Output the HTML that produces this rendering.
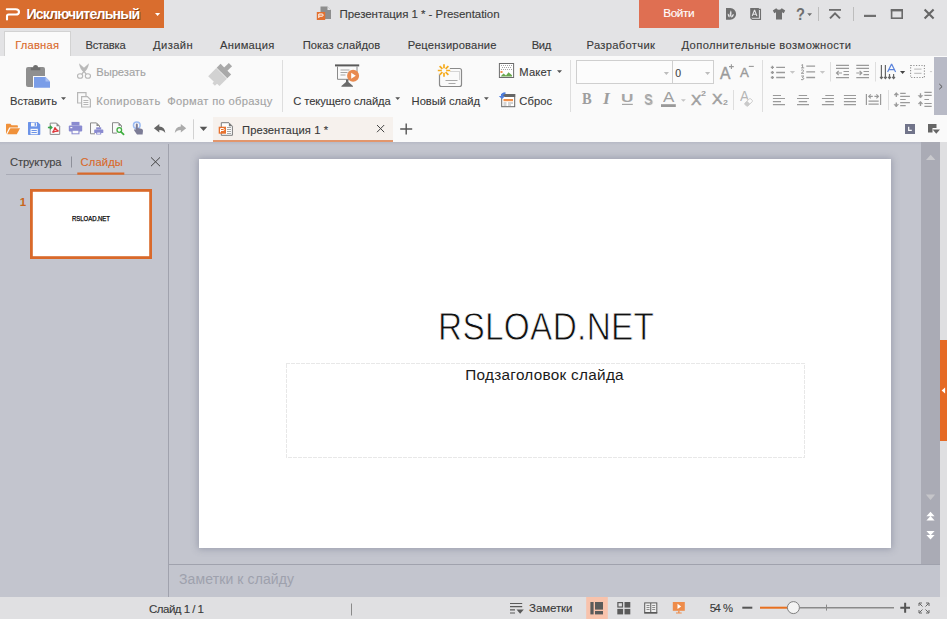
<!DOCTYPE html>
<html lang="ru">
<head>
<meta charset="utf-8">
<title>Презентация 1 * - Presentation</title>
<style>
*{box-sizing:border-box;margin:0;padding:0}
html,body{width:947px;height:619px;overflow:hidden;background:#c3c5ce}
body{font-family:"Liberation Sans",sans-serif;font-size:12px;color:#333;position:relative}
.abs{position:absolute}
.t{position:absolute;white-space:nowrap;line-height:1}
.u{-webkit-text-stroke:0.12px}
#titlebar{left:0;top:0;width:947px;height:28px;background:#e3e3e5}
#appbtn{left:0;top:0;width:164px;height:28px;background:#d96d2e}
#login{left:639px;top:0;width:80px;height:28px;background:#df6f52}
#tabrow{left:0;top:28px;width:947px;height:28px;background:#e3e3e5}
#tabactive{left:4px;top:31px;width:67px;height:25px;background:#fafafa;border:1px solid #d2d2d2;border-bottom:none}
#ribbon{left:0;top:56px;width:947px;height:86px;background:#fafafa}
#ribscroll{left:934px;top:57px;width:13px;height:58px;background:#b8bac6}
#doctab{left:213px;top:117px;width:180px;height:25px;background:#f6f1ed;border-bottom:2px solid #e2966c}
#strip{left:0;top:142px;width:947px;height:3px;background:linear-gradient(#b6b9c5,#c3c5ce)}
#leftpanel{left:0;top:146px;width:168px;height:451px;background:#c3c5ce}
#vdiv{left:168px;top:144px;width:1px;height:453px;background:#a0a2ad}
#slide{left:199px;top:159px;width:692px;height:389px;background:#fff;box-shadow:0 0 7px 1px rgba(95,100,125,.42)}
#notesline{left:169px;top:564px;width:771px;height:1px;background:#a0a2ad}
#vscroll{left:921px;top:142px;width:19px;height:422px;background:#aaabb5}
#rightstrip{left:940px;top:142px;width:7px;height:455px;background:#dfdfe1}
#orangeside{left:940px;top:340px;width:7px;height:101px;background:#e56a25}
#status{left:0;top:597px;width:947px;height:22px;background:#e0e0e2}
#thumb{left:30px;top:189px;width:122px;height:70px;background:#fff}
.sep{position:absolute;width:1px;background:#d4d4d4}
</style>
</head>
<body>
<div id="titlebar" class="abs"></div>
<div id="appbtn" class="abs"></div>
<div id="login" class="abs"></div>
<div id="tabrow" class="abs"></div>
<div id="ribbon" class="abs"></div>
<div id="tabactive" class="abs"></div>
<div id="ribscroll" class="abs"></div>
<div id="doctab" class="abs"></div>
<div id="strip" class="abs"></div>
<div id="leftpanel" class="abs"></div>
<div id="vdiv" class="abs"></div>
<div id="slide" class="abs"></div>
<div id="notesline" class="abs"></div>
<div id="vscroll" class="abs"></div>
<div id="rightstrip" class="abs"></div>
<div id="orangeside" class="abs"></div>
<div id="status" class="abs"></div>
<div id="thumb" class="abs"></div>
<svg class="abs" style="left:0;top:0" width="947" height="619" viewBox="0 0 947 619">
<!-- app logo -->
<path d="M6.8 9.3H15.6Q19 9.3 19 11.9Q19 14.5 15.6 14.5H8.6Q7 14.5 7 16V19.4" fill="none" stroke="#fff" stroke-width="2.1" stroke-linecap="round"/>
<path d="M155 13h5.2l-2.6 3z" fill="#fff"/>
<!-- title doc icon -->
<path d="M320.5 6.5h7l3.5 3.5v9h-10.5z" fill="#8e8e8e"/><path d="M327.5 6.5v3.5h3.5z" fill="#e3e3e5"/>
<rect x="316.8" y="12" width="8.4" height="8" fill="#e2702f"/>
<path d="M318.8 18v-4h3.2q1.2 0 1.200 1.100q0 1.100 -1.200 1.100h-3.200" fill="none" stroke="#fff" stroke-width="1"/>
<!-- title bar right icons -->
<g fill="#6f6f6f">
<path d="M726 8h4.200a5.900 5.900 0 0 1 0 11.800H726z"/>
<path d="M750.200 8h8.700v9.800h-8.700z"/>
<path d="M776.200 8.300l-3.400 2.200 1.500 2.700 1.700-.9v7.300h6v-7.300l1.700.9 1.500-2.700-3.400-2.200q-1.400 1.500-2.800 1.500t-2.800-1.500z"/>
<path d="M807.200 13.200h4.800l-2.400 2.700z"/>
<rect x="829" y="9" width="12" height="1.800"/>
<rect x="864" y="14.800" width="12" height="2.200"/>
</g>
<path d="M730.300 17.200C729.300 14.800 729.700 12.300 730.900 10.200C731.900 12.500 731.800 15 730.300 17.200zM729.600 17.400C728.100 16.900 727.500 15.200 727.800 13.400C729.300 14.200 729.900 15.700 729.600 17.400zM731 17.600C731 15.700 732 14.400 733.900 13.900C733.800 15.900 732.800 17.100 731 17.600z" fill="#e3e3e5"/>
<path d="M752.200 16l2.200-5.600h.3l2.200 5.600M753 14.300h3.100" fill="none" stroke="#e3e3e5" stroke-width="1.100"/>
<path d="M758.800 9.400h1.700v10h-8.200l-1.900-1.800" fill="none" stroke="#6f6f6f" stroke-width="1.100"/>
<path d="M830 18.400l5-5 5 5" fill="none" stroke="#6a6a6a" stroke-width="2"/>
<rect x="891.600" y="10.200" width="10.600" height="8" fill="none" stroke="#6a6a6a" stroke-width="1.600"/><rect x="890.800" y="9" width="12.200" height="2.400" fill="#6a6a6a"/>
<path d="M924.600 9.500l9 9M933.600 9.500l-9 9" stroke="#666" stroke-width="2.100"/>
<rect x="818" y="7" width="1" height="14" fill="#bdbdbd"/><rect x="853" y="7" width="1" height="14" fill="#bdbdbd"/>
<!-- ribbon: paste -->
<rect x="26" y="67" width="19" height="20" rx="2" fill="#8f8f8f"/>
<path d="M30.800 70.200v-2.400h2.400v-1.300q0-1.500 2.350-1.500t2.350 1.500v1.300h2.400v2.400z" fill="#6e6e6e"/>
<path d="M33 76h13l5 5v7.700h-18z" fill="#fafafa"/><path d="M34 77h11.500l4.500 4.500v6.200h-16z" fill="#7a9de8"/><path d="M45.500 77v4.500h4.500z" fill="#a9c0f2"/>
<path d="M61 97.300h5l-2.500 2.700z" fill="#555"/>
<!-- scissors -->
<g fill="none" stroke="#b7b7b7" stroke-width="1.1">
<ellipse cx="80.1" cy="76" rx="2.6" ry="2.3"/><ellipse cx="87.9" cy="76" rx="2.6" ry="2.3"/>
<path d="M84.8 70.400l-3 3.700M83.200 70.400l3 3.700" stroke-width="1.300"/>
</g>
<path d="M79 63.200L86 69.400L84.200 72.400Q79.800 69.400 79 63.200z" fill="#b9b9b9"/><path d="M89 63.200L82 69.400L83.800 72.400Q88.200 69.400 89 63.200z" fill="#b9b9b9"/>
<!-- copy -->
<g fill="#fafafa" stroke="#b7b7b7" stroke-width="1.200">
<path d="M77.600 92.600h8.400v10.400h-8.400z"/>
<path d="M81.600 96.600h5.800l3 3v7.400h-8.800z"/>
<path d="M83.400 100.500h5M83.400 102.500h5M83.400 104.500h5" stroke-width="1"/>
</g>
<!-- format painter brush -->
<g transform="translate(219.500 75.500) rotate(45)">
<rect x="-2.300" y="-15.500" width="4.600" height="7" fill="#a9a9a9"/>
<rect x="-7.500" y="-9" width="15" height="5.500" fill="#a9a9a9"/>
<path d="M-7.500 -3h15v10.500h-3.500v3h-3.500v-2h-8z" fill="#d2d2d2"/>
</g>
<rect x="282" y="60" width="1" height="52" fill="#dedede"/>
<rect x="570" y="60" width="1" height="52" fill="#dedede"/>
<rect x="762" y="60" width="1" height="52" fill="#dedede"/>
<!-- slideshow from current -->
<rect x="335" y="64.400" width="24.200" height="2" fill="#5a5a5a"/>
<path d="M337.500 66.500v12.800h19.500v-12.800" fill="none" stroke="#8a8a8a" stroke-width="1"/>
<path d="M340.500 70h9M340.500 72.500h7M340.500 75h5" stroke="#a5a5a5" stroke-width="1"/>
<path d="M346 79.500h2.400v2.500l4.600 4v.8h-11.600v-.8l4.600-4z" fill="#6a6a6a"/>
<circle cx="353.100" cy="75.700" r="6" fill="#e88a50"/><path d="M351.200 72.700l4.600 3-4.600 3z" fill="#fff"/>
<path d="M395.300 97.300h4.800l-2.400 2.600z" fill="#555"/><path d="M484 97.300h4.800l-2.400 2.600z" fill="#555"/>
<!-- new slide -->
<rect x="439.500" y="68.500" width="22" height="18" rx="2" fill="#fafafa" stroke="#8a8a8a" stroke-width="1.200"/>
<path d="M450.500 71.500h9M459.500 72.500v7" stroke="#b0b0b0" stroke-width="1" stroke-dasharray="1 1"/>
<path d="M445.500 80.500h12M448.500 83.500h7" stroke="#a8a8a8" stroke-width="1"/>
<circle cx="444" cy="70.500" r="6.200" fill="#fafafa"/>
<g stroke="#f5ab1c" stroke-width="1.700"><path d="M444 64.300v4M444 72.700v4M437.800 70.500h4M446.200 70.500h4M439.600 66.100l2.800 2.800M445.600 72.100l2.800 2.800M448.400 66.100l-2.800 2.800M442.400 72.100l-2.800 2.800"/></g>
<!-- layout icon -->
<rect x="499.400" y="63.500" width="14.200" height="14" fill="#fff" stroke="#6c6c6c" stroke-width="1"/>
<path d="M501 65.500h11M502 67.500h10M501 69.500h11" stroke="#a5a5a5" stroke-width="1" stroke-dasharray="1 1"/>
<path d="M500.500 76.500l3-3 2.500 2 2.500-3.200 3.500 3v1.200z" fill="#6aa84f"/><rect x="500.500" y="71" width="2" height="2" fill="#f0904a"/>
<path d="M557 70.300h5l-2.500 2.800z" fill="#555"/>
<!-- reset icon -->
<rect x="501.700" y="94.500" width="13" height="12.200" fill="#fff" stroke="#666" stroke-width="1"/>
<rect x="501.200" y="94" width="14" height="3" fill="#666"/>
<rect x="503.500" y="99" width="9.500" height="2.200" fill="#f0904a"/>
<path d="M503.500 103h3M508 103h5M503.500 105h3M508 105h3" stroke="#aaa" stroke-width="1"/>
<path d="M505.500 92.200q-4.600.1-4.600 3.700h-2.100l3.200 3.100 3.200-3.100h-2.100q0-1.600 2.400-1.900z" fill="#4f7fe0"/>
<!-- font combos -->
<rect x="576.500" y="60.500" width="137" height="23" fill="#fcfcfc" stroke="#cfcfcf" stroke-width="1"/>
<rect x="672" y="61" width="1" height="22" fill="#cfcfcf"/>
<path d="M663.800 72h5.200l-2.600 3z" fill="#bdbdbd"/><path d="M705 72h5.200l-2.600 3z" fill="#bdbdbd"/>
<!-- A+ A- -->
<path d="M729 66.600h4.800M731.400 64.200v4.800" stroke="#999" stroke-width="1.100"/>
<path d="M748.800 66.400h5" stroke="#999" stroke-width="1.100"/>
<!-- font color bar -->
<rect x="661" y="104.200" width="14.800" height="2.800" fill="#999"/><rect x="622" y="103.800" width="10.800" height="1.200" fill="#a6a6a6"/>
<path d="M680.900 99.200h5l-2.500 2.600z" fill="#c4c4c4"/>
<rect x="733" y="90" width="1" height="20" fill="#dedede"/>
<!-- clear format eraser -->

<!-- bullets -->
<g stroke="#9a9a9a" stroke-width="1.300">
<path d="M776.200 67.400h8.800M776.200 72.500h8.800M776.200 77.500h8.800"/>
<path d="M770.800 67.400h3.200M772.400 65.800v3.200M770.800 72.500h3.200M772.400 70.900v3.200M770.800 77.500h3.200M772.400 75.900v3.200"/>
<path d="M806.300 66.100h8.800M806.300 71.800h8.800M806.300 77.500h8.800"/>
</g>
<path d="M789.800 71h5.300l-2.650 2.800z" fill="#c6c6c6"/><path d="M819.800 71h5.300l-2.650 2.800z" fill="#c6c6c6"/>
<g fill="none" stroke="#9a9a9a" stroke-width="1"><path d="M801.300 65.300l1.300-.8v3.500M801 67.900h3.200M801.200 70.300q1.500-1 2.300 0t-2.300 3h2.800M801.200 76h2.600l-1.600 1.600q1.800 0 1.600 1.300t-2.800.7"/></g>
<rect x="830" y="62" width="1" height="19.500" fill="#dedede"/><rect x="875" y="62" width="1" height="19.500" fill="#dedede"/>
<!-- indents -->
<g stroke="#9a9a9a" stroke-width="1.200" fill="none">
<path d="M836 65.300h13M836 68.400h13M843.500 71.500h5.500M843.500 74.600h5.500M836 77.600h13"/>
<path d="M836.500 73h5.500M838.700 70.800l-2.200 2.200 2.200 2.200"/>
<path d="M856.300 65.300h12.700M856.300 68.400h12.700M863.500 71.500h5.500M863.500 74.600h5.500M856.300 77.600h12.700"/>
<path d="M856.300 73h5.500M859.600 70.800l2.200 2.200-2.200 2.200"/>
</g>
<!-- text direction -->
<g stroke="#666" stroke-width="1.200" fill="none">
<path d="M881.400 65v13.500M885.400 65v13.500M889.500 74v4.500M893.600 74v4.500"/>
<path d="M880 76.800l1.400 1.800 1.400-1.800M884 76.800l1.400 1.800 1.400-1.800M888.100 76.800l1.400 1.800 1.400-1.800M892.200 76.800l1.400 1.800 1.400-1.800"/>
</g>
<path d="M887.600 72l3.800-7.600h.4l3.800 7.600M888.800 69.600h5.600" fill="none" stroke="#5b84dc" stroke-width="1.200"/>
<path d="M900 71h5.200l-2.600 3z" fill="#444"/>
<rect x="910.6" y="65.5" width="13.800" height="12" fill="none" stroke="#909090" stroke-width="1.100" stroke-dasharray="1.200 1.500"/>
<path d="M914.200 69.100h7.300M914.200 73.300h7.300" stroke="#c4c4c4" stroke-width="1.200"/>
<path d="M929.700 71h2.600l-1.300 1.600z" fill="#c6c6c6"/>
<!-- alignment -->
<g stroke="#9a9a9a" stroke-width="1.200">
<path d="M772.900 95.500h8.100M772.900 98.500h12.100M772.900 101.600h8.100M772.900 104.600h12.100"/>
<path d="M798.700 95.500h8.400M797 98.500h12M798.700 101.600h8.400M797 104.600h12"/>
<path d="M825.300 95.500h8.600M821.900 98.500h12M825.300 101.600h8.600M821.900 104.600h12"/>
<path d="M843.900 95.500h12.100M843.900 98.500h12.100M843.900 101.600h12.100M843.900 104.600h12.100"/>
<path d="M866.4 94v11M880.600 94v11M868.500 101.100h10.200M868.500 104.200h10.200M868.800 96.400h4M874.400 96.400h4"/>
<path d="M870.800 94.400l-2 2 2 2M876.400 94.400l2 2-2 2" fill="none"/>
</g>
<rect x="888" y="90" width="1" height="20" fill="#dedede"/>
<g stroke="#9a9a9a" stroke-width="1.200" fill="none">
<path d="M900.200 93.300h5.500M900.200 96.300h9.700M900.200 99.500h5.500M900.200 102.600h9.700M900.200 105.600h5.500"/>
<path d="M896.3 93v4M896.300 102.400v4" stroke-width="1.300"/><path d="M894 95l2.300-2.600 2.300 2.600zM894 104.400l2.300 2.600 2.300-2.600z" fill="#9a9a9a" stroke-width=".5"/>
<path d="M924.400 92.400h7.300M924.400 95.300h7.300M924.400 99.500h4.600M924.400 103.500h7.300M924.400 106.400h7.300"/>
<path d="M920.5 93.300v4M920.500 102v4" stroke-width="1.300"/><path d="M918.200 95.500l2.300 2.600 2.300-2.600zM918.200 103.800l2.300-2.600 2.300 2.600z" fill="#9a9a9a" stroke-width=".5"/>
</g>
<!-- ribbon scroll chevron -->
<path d="M939.300 84l2.800 2.600-2.800 2.600" fill="none" stroke="#555" stroke-width="1"/>
<!-- QAT icons -->
<path d="M6 133.800v-9.200q0-.8.800-.8h3.600l1.200 1.400h5.500q.8 0 .8.800v1.600h-8.700l-3 6.200z" fill="#f0913a"/><path d="M7.200 134.300l3.200-6h9.600l-3.200 6z" fill="#f0913a"/>
<path d="M28 122.600q0-.7.700-.7h9l2.600 2.600v9.700q0 .7-.7.700h-10.900q-.7 0-.7-.7z" fill="#6c93e8"/>
<rect x="31" y="122.600" width="6" height="3.800" fill="#fafafa"/><rect x="34.600" y="123.100" width="1.500" height="2.700" fill="#6c93e8"/>
<rect x="30.500" y="128.800" width="7.300" height="5.500" fill="#fafafa"/><path d="M31.500 130.500h5.300M31.500 132.500h5.300" stroke="#6c93e8" stroke-width="1"/>
<path d="M50.200 123.100h6.300l3.200 3.200v8.100h-9.500z" fill="#fafafa" stroke="#8a8a8a" stroke-width="1"/><path d="M56.500 123.100v3.200h3.200z" fill="#8a8a8a"/>
<path d="M55 127.500q-.5 2.500-2.500 5M55 127.500q1 2.800 3.600 3.600M52.500 132.500q3-1.500 6.100-1.400" fill="none" stroke="#e0363a" stroke-width="1.300"/>
<path d="M47.900 127.500h3.300M50 125.700l1.900 1.800-1.900 1.800" fill="none" stroke="#3aa34a" stroke-width="1.300"/>
<g fill="#8a8bd0"><rect x="71.500" y="121.900" width="8" height="3.600"/><rect x="68.800" y="125.500" width="13.400" height="6" rx="1"/><rect x="71.500" y="129.800" width="8" height="4.500"/></g>
<rect x="72.600" y="130.800" width="5.800" height="2.500" fill="#fafafa"/><rect x="70.300" y="127" width="2" height="1.200" fill="#fafafa"/>
<path d="M95 133.800h-4.500v-10.900h6l3 3v1.500" fill="none" stroke="#8a8a8a" stroke-width="1"/><path d="M96.500 122.900v3h3z" fill="#8a8a8a"/>
<g fill="#8a8bd0"><rect x="96.200" y="127.300" width="5" height="2.200"/><rect x="94.200" y="129.500" width="9.100" height="3.500" rx=".6"/><rect x="96.200" y="132" width="5" height="2.500"/></g><rect x="97.200" y="132.600" width="3" height="1.200" fill="#fafafa"/>
<path d="M117 133.100h-4.500v-10.400h6l3 3v1.800" fill="none" stroke="#8a8a8a" stroke-width="1"/><path d="M118.500 122.700v3h3z" fill="#8a8a8a"/>
<circle cx="119.300" cy="130" r="2.300" fill="#fafafa" stroke="#3fae3f" stroke-width="1.300"/><path d="M121 131.800l2.600 2.600" stroke="#3fae3f" stroke-width="1.700" stroke-linecap="round"/>
<circle cx="136.800" cy="125.300" r="3.300" fill="none" stroke="#9dbcf3" stroke-width="1.600"/>
<path d="M135.800 124.600q0-1 1-1t1 1v3.400l3.600.7q1.700.4 1.600 2l-.4 3.800h-5.600l-2.800-4q-.4-.8.400-1.200t1.200.4z" fill="#7c7c96"/>
<path d="M153.900 128.200l5.400-4.200v2.600q5.600.4 6 6.400-2-3-6-3v2.500z" fill="#666"/>
<path d="M186.200 128.200l-5.400-4.200v2.600q-5.600.4-6 6.400 2-3 6-3v2.500z" fill="#ababab"/>
<rect x="193" y="119.300" width="1" height="20" fill="#d2d2d2"/>
<path d="M199.700 126.800h7.600l-3.800 4.300z" fill="#555"/>
<!-- doc tab icon -->
<path d="M221.300 122.700h7.600l3.500 3.500v9.100h-11.100z" fill="#fdfdfd" stroke="#7c7c7c" stroke-width="1"/><path d="M228.900 122.700v3.500h3.500z" fill="#7c7c7c"/>
<path d="M227 127.500h4M227 129.500h4M227 131.500h4M227 133.500h4" stroke="#a8a8a8" stroke-width="1"/>
<rect x="218.700" y="126.700" width="7.300" height="7" fill="#e8722f"/>
<path d="M220.500 132.300v-3.800h2.700q1 0 1 1t-1 1h-2.700" fill="none" stroke="#fff" stroke-width="1"/>
<path d="M377 125l7.200 7.200M384.200 125l-7.200 7.200" stroke="#444" stroke-width="1"/>
<path d="M400.200 129h12M406.200 123.500v11" stroke="#555" stroke-width="1.400"/>
<!-- mode icons right -->
<rect x="905" y="124" width="10" height="10" fill="#71748a"/><path d="M908.700 126.800v3.600h3.100" fill="none" stroke="#fff" stroke-width="1.200"/>
<path d="M928 124h8.500v4h-4v4.500h-4.500z" fill="#666"/><path d="M932.600 129.500h7.400l-3.700 4.300z" fill="#666"/>
<!-- left panel -->
<rect x="71" y="156.500" width="1" height="11" fill="#8e909a"/>
<rect x="6" y="174" width="155" height="1" fill="#a9abb6"/>
<rect x="77.300" y="172.500" width="47" height="2.200" fill="#d9692a"/>
<path d="M151 157.400l9 8.800M160 157.400l-9 8.800" stroke="#444" stroke-width="1"/>
<!-- placeholder -->
<rect x="286.5" y="363.5" width="518" height="94" fill="none" stroke="#d0d0d0" stroke-width="1" stroke-dasharray="1 1 1 2"/>
<rect x="31.400" y="190.400" width="119.200" height="67.200" fill="none" stroke="#d9692a" stroke-width="2.800"/>
<!-- vscroll -->
<path d="M926 160h9.400l-4.700-5.200z" fill="#c9c9cd"/>
<path d="M925.800 494.600h9.400l-4.700 5.400z" fill="#c5c5c9"/>
<path d="M926.400 516.200h8.200l-4.100-4.500zM926.400 520.400h8.200l-4.100-4.500z" fill="#fff"/>
<path d="M926.400 530.900h8.200l-4.100 4.500zM926.400 534.900h8.200l-4.100 4.500z" fill="#fff"/>
<path d="M945.100 387.600v5.800l-3.500-2.900z" fill="#fff"/>
<!-- status bar -->
<rect x="351" y="603.500" width="1" height="12" fill="#8a8a8a"/>
<path d="M510 603.500h12.200M510 606.700h12.200M510 609.900h5M510 613h5" stroke="#5a5a5a" stroke-width="1.200"/><path d="M516.500 609.500h7.300l-3.650 4.200z" fill="#5a5a5a"/>
<rect x="586.200" y="597" width="21.600" height="22" fill="#f8c3ac"/>
<g fill="#5a5a5a"><rect x="590.400" y="602" width="3.200" height="12.400"/><rect x="595" y="602" width="8" height="7.600"/><rect x="595" y="611" width="8" height="3.400"/>
<rect x="624.500" y="602" width="5.800" height="5.600"/><rect x="617.300" y="608.900" width="5.800" height="5.500"/><rect x="624.500" y="608.900" width="5.800" height="5.500"/></g>
<rect x="617.900" y="602.600" width="4.600" height="4.400" fill="none" stroke="#5a5a5a" stroke-width="1.200"/>
<rect x="644.700" y="602.900" width="12.100" height="9.600" fill="#eee" stroke="#5a5a5a" stroke-width="1"/><rect x="644.200" y="612.400" width="13.100" height="1.300" fill="#5a5a5a"/>
<path d="M650.750 603v9.500" stroke="#5a5a5a" stroke-width="1"/><path d="M646.500 605.500h3M646.500 607.500h3M646.500 609.500h3M652.200 605.500h3M652.200 607.500h3M652.200 609.500h3" stroke="#8a8a8a" stroke-width="1"/>
<rect x="672.800" y="602" width="12" height="8.800" fill="#ee8c4a"/><path d="M677.500 603.700l3.700 2.700-3.700 2.700z" fill="#fff"/><path d="M678.200 610.800h1.300v1.800h2.200v1h-5.700v-1h2.200z" fill="#ee8c4a"/>
<rect x="742.300" y="606.700" width="10" height="2" fill="#555"/>
<rect x="760" y="606.700" width="28" height="2" fill="#e8701f"/>
<rect x="799" y="607" width="95" height="1.500" fill="#8a8a8a"/>
<rect x="826" y="604.600" width="1" height="6" fill="#8a8a8a"/>
<circle cx="793.400" cy="607.600" r="6" fill="#f4f4f4" stroke="#808080" stroke-width="1"/>
<path d="M900.300 607.700h9.700M905.150 602.800v9.900" stroke="#555" stroke-width="2"/>
<g stroke="#666" stroke-width="1" fill="none"><path d="M919 606v-3h3M926 603h3v3M929 610v3h-3M922 613h-3v-3M919.200 603.200l3.300 3.300M928.800 603.200l-3.300 3.300M928.800 612.800l-3.300-3.300M919.200 612.800l3.300-3.300"/></g>
</svg>

<div class="t" style="left:26.4px;top:6.9px;font-size:14.2px;color:#fff;letter-spacing:-0.85px;font-weight:700;text-shadow:1px 1px 0 rgba(110,45,5,.75)">Исключительный</div>
<div class="t u" style="left:339.5px;top:8.5px;font-size:11.5px;color:#3c3c3c;letter-spacing:-0.05px">Презентация 1 * - Presentation</div>
<div class="t u" style="left:663.2px;top:8.2px;font-size:11.8px;color:#fff;letter-spacing:-0.40px">Войти</div>
<div class="t u" style="left:15.2px;top:39.5px;font-size:11.2px;color:#d9692a;letter-spacing:0.20px">Главная</div>
<div class="t u" style="left:85.5px;top:39.5px;font-size:11.2px;color:#3a3a3a;letter-spacing:-0.23px">Вставка</div>
<div class="t u" style="left:153.0px;top:39.5px;font-size:11.2px;color:#3a3a3a;letter-spacing:0.40px">Дизайн</div>
<div class="t u" style="left:220.0px;top:39.5px;font-size:11.2px;color:#3a3a3a;letter-spacing:0.25px">Анимация</div>
<div class="t u" style="left:302.7px;top:39.5px;font-size:11.2px;color:#3a3a3a;letter-spacing:0.05px">Показ слайдов</div>
<div class="t u" style="left:407.8px;top:39.5px;font-size:11.2px;color:#3a3a3a;letter-spacing:0.18px">Рецензирование</div>
<div class="t u" style="left:531.7px;top:39.5px;font-size:11.2px;color:#3a3a3a;letter-spacing:-0.33px">Вид</div>
<div class="t u" style="left:586.5px;top:39.5px;font-size:11.2px;color:#3a3a3a;letter-spacing:0.31px">Разработчик</div>
<div class="t u" style="left:681.5px;top:39.5px;font-size:11.2px;color:#3a3a3a;letter-spacing:0.41px">Дополнительные возможности</div>
<div class="t u" style="left:10.0px;top:95.5px;font-size:11.2px;color:#3a3a3a;letter-spacing:-0.06px">Вставить</div>
<div class="t u" style="left:96.3px;top:66.5px;font-size:11.2px;color:#a3a3a3;letter-spacing:-0.05px">Вырезать</div>
<div class="t u" style="left:96.3px;top:95.5px;font-size:11.2px;color:#a3a3a3;letter-spacing:0.41px">Копировать</div>
<div class="t u" style="left:167.3px;top:95.5px;font-size:11.2px;color:#a3a3a3;letter-spacing:0.29px">Формат по образцу</div>
<div class="t u" style="left:293.2px;top:95.5px;font-size:11.2px;color:#3a3a3a;letter-spacing:-0.08px">С текущего слайда</div>
<div class="t u" style="left:411.6px;top:95.5px;font-size:11.2px;color:#3a3a3a;letter-spacing:-0.04px">Новый слайд</div>
<div class="t u" style="left:519.3px;top:66.5px;font-size:11.2px;color:#3a3a3a;letter-spacing:0.18px">Макет</div>
<div class="t u" style="left:519.3px;top:95.5px;font-size:11.2px;color:#3a3a3a;letter-spacing:0.09px">Сброс</div>
<div class="t u" style="left:675.2px;top:68.0px;font-size:10.5px;color:#444;letter-spacing:0.00px">0</div>
<div class="t u" style="left:242.0px;top:124.7px;font-size:11.2px;color:#3a3a3a;letter-spacing:0.13px">Презентация 1 *</div>
<div class="t u" style="left:10.1px;top:156.6px;font-size:11.2px;color:#444;letter-spacing:-0.20px">Структура</div>
<div class="t u" style="left:80.6px;top:156.6px;font-size:11.2px;color:#d9692a;letter-spacing:0.13px">Слайды</div>
<div class="t" style="left:19.8px;top:196.7px;font-size:11.5px;color:#c8651b;letter-spacing:0.00px;font-weight:700">1</div>
<div class="t" style="left:72.2px;top:215.1px;font-size:7px;color:#000;letter-spacing:-0.06px;-webkit-text-stroke:.25px #000;--sx:0.86;transform-origin:0 0;transform:scaleX(0.86)">RSLOAD.NET</div>
<div class="t" style="left:437.6px;top:307.6px;font-size:38.8px;color:#111;letter-spacing:0.36px;-webkit-text-stroke:0.8px #fff;--sx:0.86;transform-origin:0 0;transform:scaleX(0.86)">RSLOAD.NET</div>
<div class="t" style="left:465.3px;top:367.0px;font-size:15.3px;color:#1a1a1a;letter-spacing:0.29px">Подзаголовок слайда</div>
<div class="t" style="left:179.0px;top:572.1px;font-size:14px;color:#9ea1ad;letter-spacing:0.11px">Заметки к слайду</div>
<div class="t u" style="left:149.0px;top:603.5px;font-size:11.5px;color:#3a3a3a;letter-spacing:-0.51px">Слайд 1 / 1</div>
<div class="t u" style="left:529.1px;top:603.3px;font-size:11.5px;color:#3a3a3a;letter-spacing:-0.11px">Заметки</div>
<div class="t u" style="left:709.7px;top:602.6px;font-size:11.3px;color:#3a3a3a;letter-spacing:-1.45px;word-spacing:2px">54 %</div>
<div class="t" style="left:796.02px;top:5.89px;font-size:16.48px;color:#6f6f6f;font-family:'Liberation Sans',sans-serif;transform-origin:0 0;transform:scaleX(0.887);font-weight:700">?</div>
<div class="t" style="left:581.55px;top:91.48px;font-size:15.76px;color:#9e9e9e;font-family:'Liberation Serif',serif;transform-origin:0 0;transform:scaleX(0.927);font-weight:700">B</div>
<div class="t" style="left:603.38px;top:91.48px;font-size:15.76px;color:#9e9e9e;font-family:'Liberation Serif',serif;transform-origin:0 0;transform:scaleX(1.122);font-weight:700;font-style:italic">I</div>
<div class="t" style="left:621.17px;top:93.75px;font-size:10.29px;color:#a6a6a6;font-family:'Liberation Sans',sans-serif;transform-origin:0 0;transform:scaleX(1.673);font-weight:700">U</div>
<div class="t" style="left:644.31px;top:92.38px;font-size:14.44px;color:#a6a6a6;font-family:'Liberation Sans',sans-serif;transform-origin:0 0;transform:scaleX(0.857);text-shadow:1px 1px 1px rgba(0,0,0,.4)">S</div>
<div class="t" style="left:663.20px;top:89.73px;font-size:14.78px;color:#a0a0a0;font-family:'Liberation Sans',sans-serif;transform-origin:0 0;transform:scaleX(1.151)">A</div>
<div class="t" style="left:690.59px;top:93.20px;font-size:14.35px;color:#a0a0a0;font-family:'Liberation Sans',sans-serif;transform-origin:0 0;transform:scaleX(1.095);-webkit-text-stroke:.45px">X</div>
<div class="t" style="left:701.43px;top:91.49px;font-size:6.71px;color:#a0a0a0;font-family:'Liberation Sans',sans-serif;transform-origin:0 0;transform:scaleX(1.337);font-weight:700">2</div>
<div class="t" style="left:711.88px;top:92.36px;font-size:14.64px;color:#a0a0a0;font-family:'Liberation Sans',sans-serif;transform-origin:0 0;transform:scaleX(1.084);-webkit-text-stroke:.45px">X</div>
<div class="t" style="left:722.74px;top:99.99px;font-size:6.71px;color:#a0a0a0;font-family:'Liberation Sans',sans-serif;transform-origin:0 0;transform:scaleX(1.307);font-weight:700">2</div>
<div class="t" style="left:719.70px;top:65.50px;font-size:15.65px;color:#9a9a9a;font-family:'Liberation Sans',sans-serif;transform-origin:0 0;transform:scaleX(1.001);-webkit-text-stroke:.4px">A</div>
<div class="t" style="left:740.30px;top:67.33px;font-size:12.32px;color:#9a9a9a;font-family:'Liberation Sans',sans-serif;transform-origin:0 0;transform:scaleX(1.078);-webkit-text-stroke:.35px">A</div>
<div class="t" style="left:739.80px;top:89.90px;font-size:13.77px;color:#b5b5b5;font-family:'Liberation Sans',sans-serif;transform-origin:0 0;transform:scaleX(0.976)">A</div>
<svg class="abs" style="left:0;top:0" width="947" height="619" viewBox="0 0 947 619">
<g transform="translate(748.6 102.4) rotate(-45)"><rect x="-4.600" y="-2.700" width="9.200" height="5.400" fill="#fafafa"/><rect x="-4" y="-2" width="8" height="4" rx=".8" fill="#fcfcfc" stroke="#c6c6c6" stroke-width=".9"/><path d="M-4 -1.200q0-.8.8-.8h3.200v4h-3.200q-.8 0-.8-.8z" fill="#c9c9c9"/></g>
</svg>
</body>
</html>
